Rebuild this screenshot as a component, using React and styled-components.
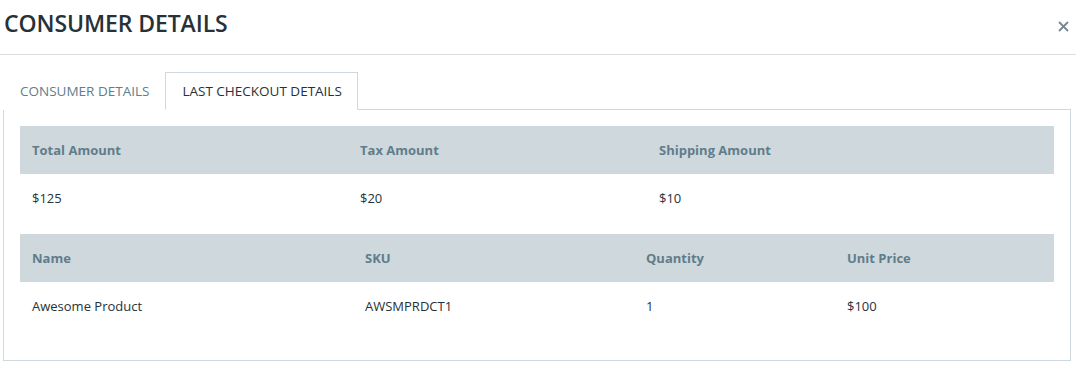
import React, { useState } from 'react';
import styled, { createGlobalStyle } from 'styled-components';

const GlobalStyle = createGlobalStyle`
  body {
    margin: 0;
    background: #fff;
    font-family: "Open Sans", "Noto Sans", sans-serif;
    color: #263238;
  }
`;

const Modal = styled.div`
  width: 1076px;
`;

const Header = styled.div`
  display: flex;
  align-items: center;
  justify-content: space-between;
  height: 54px;
  padding: 0 7px 0 4px;
  border-bottom: 1px solid #dadfe2;
`;

const Title = styled.h1`
  margin: 0 0 8px;
  font-size: 23px;
  font-weight: 600;
  letter-spacing: -0.1px;
  color: #263238;
`;

const Close = styled.button`
  border: 0;
  background: none;
  padding: 0;
  margin-bottom: 1px;
  width: 12px;
  height: 12px;
  display: flex;
  align-items: center;
  justify-content: center;
  cursor: pointer;
`;

const Body = styled.div`
  padding: 17px 5px 0 3px;
`;

const TabList = styled.div`
  display: flex;
`;

const Tab = styled.button`
  height: 38px;
  padding: 0 15px 0 16px;
  margin-bottom: -1px;
  border: 1px solid ${p => (p.$active ? '#cfd8dc' : 'transparent')};
  border-bottom: 1px solid ${p => (p.$active ? '#fff' : 'transparent')};
  background: #fff;
  font-family: inherit;
  font-size: 13.5px;
  text-transform: uppercase;
  color: ${p => (p.$active ? '#263238' : '#607d8b')};
  position: relative;
  cursor: pointer;
`;

const Panel = styled.div`
  border: 1px solid #cfd8dc;
  padding: 16px 16px 30px;
`;

const Table = styled.table`
  width: 100%;
  border-collapse: collapse;
  table-layout: fixed;
  font-size: 13px;
  & + & {
    margin-top: 12px;
  }
`;

const Th = styled.th`
  box-sizing: border-box;
  background: #cfd8dc;
  color: #607d8b;
  font-weight: 700;
  text-align: left;
  height: 48px;
  padding: 0 12px;
  width: ${p => p.$w || 'auto'};
`;

const Td = styled.td`
  height: 48px;
  padding: 0 12px;
  color: #263238;
`;

const totals = [
  { label: 'Total Amount', value: '$125', w: '328px' },
  { label: 'Tax Amount', value: '$20', w: '299px' },
  { label: 'Shipping Amount', value: '$10' },
];

const itemCols = [
  { label: 'Name', key: 'name', w: '333px' },
  { label: 'SKU', key: 'sku', w: '281px' },
  { label: 'Quantity', key: 'qty', w: '201px' },
  { label: 'Unit Price', key: 'price' },
];

const items = [{ name: 'Awesome Product', sku: 'AWSMPRDCT1', qty: 1, price: '$100' }];

export default function App() {
  const [tab, setTab] = useState('checkout');

  return (
    <Modal>
      <GlobalStyle />
      <Header>
        <Title>CONSUMER DETAILS</Title>
        <Close aria-label="Close">
          <svg width="11" height="11" viewBox="0 0 11 11">
            <path d="M1 1L10 10M10 1L1 10" stroke="#78868e" strokeWidth="1.8" />
          </svg>
        </Close>
      </Header>
      <Body>
        <TabList>
          <Tab $active={tab === 'consumer'} onClick={() => setTab('consumer')}>Consumer Details</Tab>
          <Tab $active={tab === 'checkout'} onClick={() => setTab('checkout')}>Last Checkout Details</Tab>
        </TabList>
        <Panel>
          <Table>
            <thead>
              <tr>
                {totals.map(t => <Th key={t.label} $w={t.w}>{t.label}</Th>)}
              </tr>
            </thead>
            <tbody>
              <tr>
                {totals.map(t => <Td key={t.label}>{t.value}</Td>)}
              </tr>
            </tbody>
          </Table>
          <Table>
            <thead>
              <tr>
                {itemCols.map(c => <Th key={c.key} $w={c.w}>{c.label}</Th>)}
              </tr>
            </thead>
            <tbody>
              {items.map(item => (
                <tr key={item.sku}>
                  {itemCols.map(c => <Td key={c.key}>{item[c.key]}</Td>)}
                </tr>
              ))}
            </tbody>
          </Table>
        </Panel>
      </Body>
    </Modal>
  );
}
